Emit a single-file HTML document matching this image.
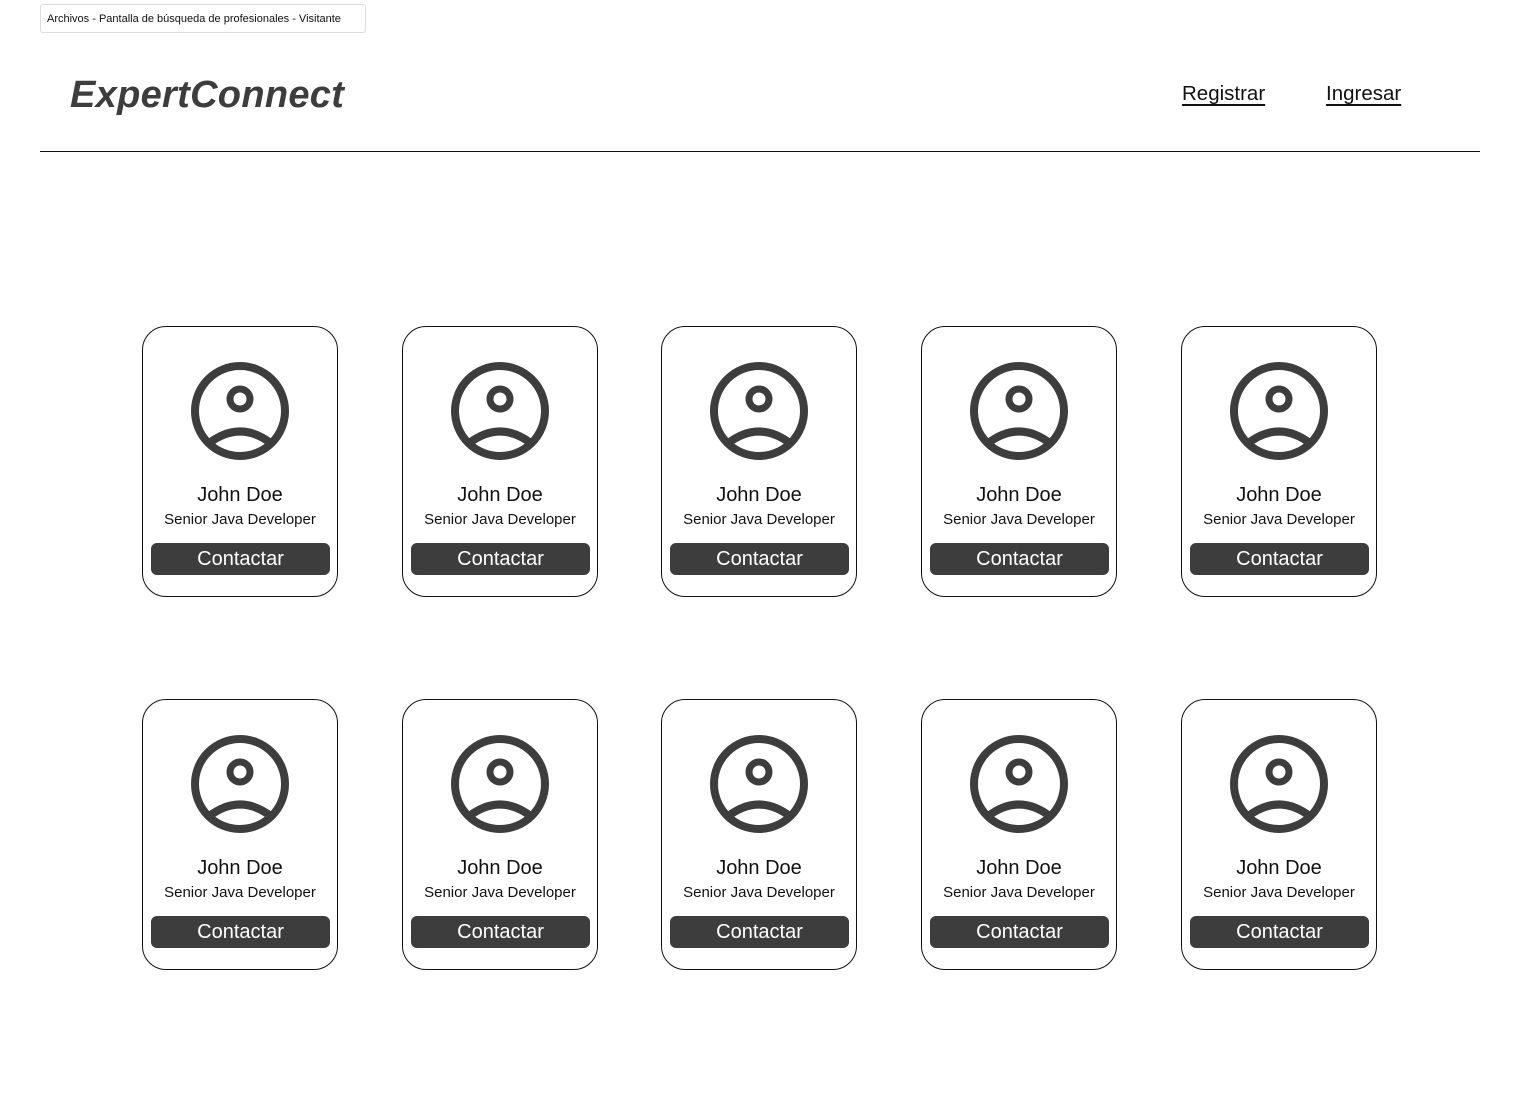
<!DOCTYPE html>
<html><head><meta charset="utf-8"><style>
body{margin:0;width:1520px;height:1104px;background:#fff;font-family:"Liberation Sans",sans-serif;position:relative;overflow:hidden}
.tag{position:absolute;left:40px;top:4px;height:29px;width:326px;border:1px solid #ddd;border-radius:3px;font-size:11px;line-height:28px;padding-left:6px;box-sizing:border-box;color:#111}
.logo{position:absolute;left:70px;top:74px;font-size:38px;font-weight:bold;font-style:italic;color:#3d3d3d;letter-spacing:0.3px}
.nav{position:absolute;top:82px;font-size:20.5px;color:#111;text-decoration:underline;text-underline-offset:4px}
.hr{position:absolute;left:40px;top:151px;width:1440px;height:1px;background:#111}
.card{position:absolute;width:194px;height:269px;border:1px solid #111;border-radius:24px;text-align:center}
.card svg{position:absolute;left:47px;top:34px}
.name{position:absolute;top:157px;width:100%;font-size:20px;color:#111}
.role{position:absolute;top:184px;width:100%;font-size:15px;color:#111}
.btn{position:absolute;left:8px;top:216px;width:179px;height:32px;background:#3d3d3d;border-radius:6px;color:#fff;font-size:20px;line-height:32px}
</style></head><body>
<div class="tag">Archivos - Pantalla de búsqueda de profesionales - Visitante</div>
<div class="logo">ExpertConnect</div>
<div class="nav" style="left:1182px">Registrar</div>
<div class="nav" style="left:1326px">Ingresar</div>
<div class="hr"></div>
<div id="g"></div>
<script>
var xs=[142,402,661,921,1181],ys=[326,699],h='';
ys.forEach(function(y){xs.forEach(function(x){
h+='<div class="card" style="left:'+x+'px;top:'+y+'px"><svg width="100" height="100" viewBox="-50 -50 100 100"><circle r="45" fill="none" stroke="#3d3d3d" stroke-width="8"/><circle cy="-12" r="10" fill="none" stroke="#3d3d3d" stroke-width="7"/><path d="M-32 33 Q0 8 32 33" fill="none" stroke="#3d3d3d" stroke-width="8"/></svg><div class="name">John Doe</div><div class="role">Senior Java Developer</div><div class="btn">Contactar</div></div>';
});});
document.getElementById('g').innerHTML=h;
</script>
</body></html>
